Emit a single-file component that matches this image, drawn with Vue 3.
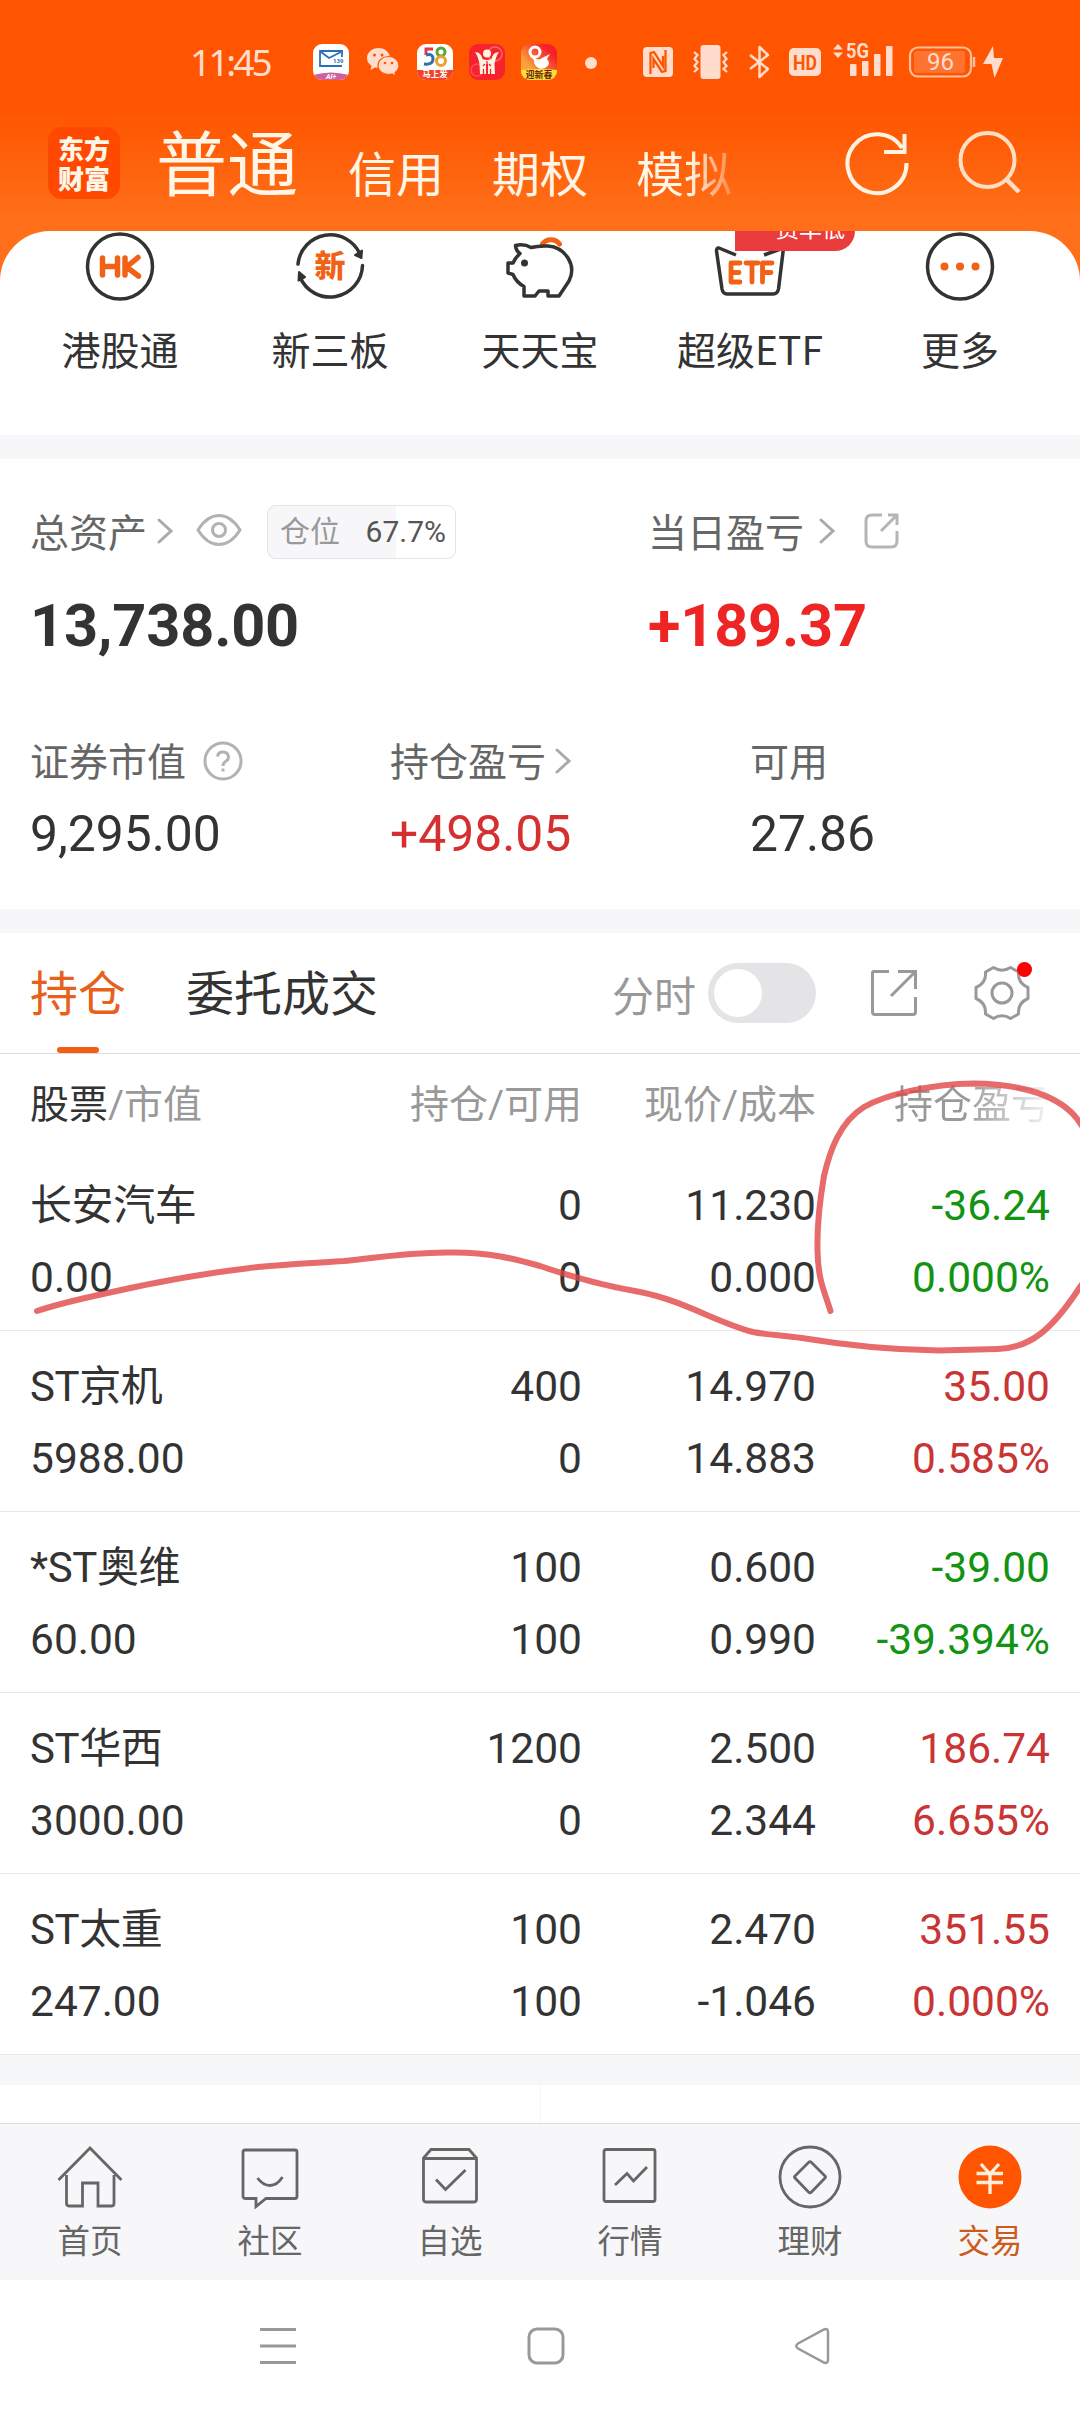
<script setup>
const markets = ['信用', '期权']
const positions = [
  { name: '长安汽车', value: '0.00', hold: '0', avail: '0', price: '11.230', cost: '0.000', pl: '-36.24', rate: '0.000%', trend: 'down' },
  { name: 'ST京机', value: '5988.00', hold: '400', avail: '0', price: '14.970', cost: '14.883', pl: '35.00', rate: '0.585%', trend: 'up' },
  { name: '*ST奥维', value: '60.00', hold: '100', avail: '100', price: '0.600', cost: '0.990', pl: '-39.00', rate: '-39.394%', trend: 'down' },
  { name: 'ST华西', value: '3000.00', hold: '1200', avail: '0', price: '2.500', cost: '2.344', pl: '186.74', rate: '6.655%', trend: 'up' },
  { name: 'ST太重', value: '247.00', hold: '100', avail: '100', price: '2.470', cost: '-1.046', pl: '351.55', rate: '0.000%', trend: 'up' },
]
</script>

<template>
  <div class="screen">
    <header class="top">
      <div class="status">
        <span class="time">11:45</span>
        <div class="apps">
          <svg width="36" height="36" viewBox="0 0 36 36">
            <defs><clipPath id="m1"><rect width="36" height="36" rx="9" /></clipPath></defs>
            <g clip-path="url(#m1)">
              <rect width="36" height="36" fill="#fff" />
              <path d="M0 31Q18 26 36 31V36H0Z" fill="#d0609c" />
              <path d="M29 13V7H7V22H29" fill="none" stroke="#2a70b8" stroke-width="1.8" />
              <path d="M8 8L16 14L28 8" fill="none" stroke="#2a70b8" stroke-width="1.8" />
              <text x="20" y="19" font-size="6" font-weight="700" fill="#2a70b8">139</text>
              <text x="18" y="35" font-size="7" font-weight="700" font-style="italic" fill="#fff" text-anchor="middle">AI+</text>
            </g>
          </svg>
          <svg width="36" height="36" viewBox="0 0 36 36">
            <g fill="#ffdccb">
              <path d="M13.500 4C7 4 2 8.500 2 14c0 3.500 1.800 6 4.500 7.800L5.500 26l4.500-2.500c1 .3 2.300.5 3.500.5C20 24 25 19.500 25 14S20 4 13.500 4Z" />
              <path d="M23.500 12.500c-6 0-10.500 4-10.500 9s4.500 9 10.500 9c1.200 0 2.300-.2 3.400-.5L31 32l-1-3.500c2.500-1.700 4-4.200 4-7 0-5-4.500-9-10.500-9Z" stroke="#ff5500" stroke-width="1.200" />
            </g>
            <g fill="#ff5500"><circle cx="9.500" cy="11" r="1.500" /><circle cx="17" cy="11" r="1.500" /><circle cx="20" cy="19" r="1.300" /><circle cx="27" cy="19" r="1.300" /></g>
          </svg>
          <svg width="36" height="36" viewBox="0 0 36 36">
            <defs><clipPath id="m2"><rect width="36" height="36" rx="9" /></clipPath></defs>
            <g clip-path="url(#m2)">
              <rect width="36" height="36" fill="#fff" />
              <rect y="26" width="36" height="10" fill="#f0432a" />
              <g fill="none" stroke-width="3">
                <path d="M16 5H9V11" stroke="#e2364a" />
                <path d="M9 11Q16 9 16 15T7 20" stroke="#2c6fb5" />
                <circle cx="24" cy="8" r="4" stroke="#58a63c" />
                <circle cx="24" cy="17" r="4.500" stroke="#eda027" />
              </g>
              <text x="18" y="33" font-size="8.500" font-weight="700" fill="#fff" text-anchor="middle">马上发</text>
            </g>
          </svg>
          <svg width="36" height="36" viewBox="0 0 36 36">
            <rect width="36" height="36" rx="9" fill="#f6232e" />
            <circle cx="26" cy="10" r="7" fill="none" stroke="#fa6a62" stroke-width="1.500" />
            <circle cx="8" cy="26" r="6" fill="none" stroke="#fa4f50" stroke-width="1.500" />
            <g fill="#fff3e2">
              <circle cx="18" cy="9.500" r="4" />
              <path d="M6 8Q12 8 13.500 15Q18 17 22.500 15Q24 8 30 8Q27 12 25.500 20L26 30H19V20H17V30H11L10.500 20Q9 12 6 8Z" />
            </g>
            <path d="M18 17V30M14 22L16 20M22 22L20 20M14.500 25V30M21.500 25V30" stroke="#f6232e" stroke-width="1.300" />
          </svg>
          <svg width="36" height="36" viewBox="0 0 36 36">
            <defs>
              <clipPath id="m3"><rect width="36" height="36" rx="9" /></clipPath>
              <linearGradient id="g3" x1="0" y1="1" x2="1" y2="0"><stop offset=".3" stop-color="#f9a13a" /><stop offset=".8" stop-color="#f5202a" /></linearGradient>
            </defs>
            <g clip-path="url(#m3)">
              <rect width="36" height="36" fill="url(#g3)" />
              <circle cx="14" cy="8" r="5" fill="none" stroke="#fff" stroke-width="3" />
              <path d="M9 13Q14 15 13 19Q17 27 24 24Q31 20 26 15L29 10L21 14Q17 18 12 12Z" fill="#fff" />
              <path d="M0 26Q18 24 36 26V36H0Z" fill="#ffe13a" />
              <text x="18" y="33.500" font-size="9" font-weight="700" fill="#6b2410" text-anchor="middle">迎新春</text>
            </g>
          </svg>
        </div>
        <i class="more-dot"></i>
        <svg class="s-nfc" width="30" height="30" viewBox="0 0 30 30">
          <rect width="30" height="30" rx="4" fill="#ffdccb" />
          <path d="M7.500 27V6L11 5L20 19V9M22.500 3V24L19 25L10.500 12V21" fill="none" stroke="#ff5500" stroke-width="2.300" />
        </svg>
        <svg class="s-vib" width="35" height="34" viewBox="0 0 35 34">
          <rect x="7.500" width="20" height="34" rx="3" fill="#ffdccb" />
          <path d="M1 7L4.500 10L1.500 14L4.500 17L1.500 21L4.500 24L1 27M34 7L30.500 10L33.500 14L30.500 17L33.500 21L30.500 24L34 27" fill="none" stroke="#ffdccb" stroke-width="2.300" />
        </svg>
        <svg class="s-bt" width="21" height="34" viewBox="0 0 21 34">
          <path d="M1 10L19 24L10.500 32V2L19 10L1 24" fill="none" stroke="#ffdccb" stroke-width="2.500" stroke-linejoin="round" />
        </svg>
        <svg class="s-hd" width="32" height="28" viewBox="0 0 32 28">
          <rect width="32" height="28" rx="5" fill="#ffdccb" />
          <text x="16" y="21.500" font-size="21" font-weight="700" fill="#ff5500" text-anchor="middle" textLength="24" lengthAdjust="spacingAndGlyphs">HD</text>
        </svg>
        <svg class="s-5g" width="60" height="34" viewBox="0 0 60 34">
          <g fill="#ffdccb">
            <path d="M0 6.500L5 1L10 6.500ZM0 9.500L5 15L10 9.500Z" />
            <text x="13" y="15" font-size="20" font-weight="700" textLength="23" lengthAdjust="spacingAndGlyphs">5G</text>
            <rect x="17" y="21" width="6.500" height="12" rx="1" /><rect x="29" y="18" width="6.500" height="15" rx="1" />
            <rect x="41" y="11" width="6.500" height="22" rx="1" /><rect x="53" y="3" width="6.500" height="30" rx="1" />
          </g>
        </svg>
        <svg class="s-bat" width="67" height="32" viewBox="0 0 67 32">
          <rect x="1" y="1.500" width="61" height="29" rx="8" fill="none" stroke="#ffbf9c" stroke-width="2.200" />
          <rect x="5" y="5" width="51" height="22" rx="3" fill="#ff7330" />
          <path d="M65 11V21" stroke="#ffbf9c" stroke-width="2.500" />
          <text x="31.500" y="24" font-size="24" fill="#ffdccb" text-anchor="middle">96</text>
        </svg>
        <svg class="s-bolt" width="20" height="32" viewBox="0 0 20 32"><path d="M10 0L0 18H8.500L11.500 32L20 12H11Z" fill="#ffdccb" /></svg>
      </div>
      <div class="appbar">
        <div class="logo"><span>东方</span><span>财富</span></div>
        <nav class="accounts">
          <b class="current">普通</b>
          <span v-for="m in markets" :key="m">{{ m }}</span>
          <span class="faded">模拟</span>
        </nav>
        <svg class="refresh" width="66" height="66" viewBox="0 0 66 66">
          <path d="M61.500 33A29.500 29.500 0 1 1 57 18M59.500 4V22H39" fill="none" stroke="#fff4e2" stroke-width="4" />
        </svg>
        <svg class="search" width="66" height="66" viewBox="0 0 66 66">
          <circle cx="29.500" cy="30" r="27" fill="none" stroke="#ffdfc4" stroke-width="4" />
          <path d="M48 49L61 62" stroke="#ffdfc4" stroke-width="4.500" />
        </svg>
      </div>
    </header>

    <div class="panel-wrap">
      <section class="shortcuts">
        <div class="shortcut">
          <svg width="72" height="72" viewBox="0 0 72 72">
            <circle cx="36" cy="35.500" r="32.500" fill="none" stroke="#333" stroke-width="3.500" />
            <g fill="none" stroke="#f26216" stroke-width="5.500" stroke-linecap="round" stroke-linejoin="round"><path d="M18.500 27V44M33.500 27V44M18.500 35.500H33.500M41 27V44M54 26.500L42.500 36L54.500 45" /></g>
          </svg>
          <span>港股通</span>
        </div>
        <div class="shortcut">
          <svg width="72" height="72" viewBox="0 0 72 72">
            <path d="M4 33A32.500 32.500 0 0 1 66 23M68.500 34.500A32.500 32.500 0 0 1 6 46" fill="none" stroke="#333" stroke-width="3.500" stroke-linecap="round" />
            <path d="M61 24L68 19.500L67.500 27ZM11 46L4.500 49.500L5 41Z" fill="#333" stroke="#333" stroke-width="2" stroke-linejoin="round" />
            <text class="cjk" x="36" y="46" font-size="31" font-weight="900" fill="#f26216" text-anchor="middle">新</text>
          </svg>
          <span>新三板</span>
        </div>
        <div class="shortcut">
          <svg width="72" height="72" viewBox="0 0 72 72">
            <path d="M38.500 13A10.500 10.500 0 0 1 55.500 13" fill="none" stroke="#f26216" stroke-width="5" stroke-linecap="round" />
            <path d="M27 16.500Q20 12.500 11.500 14.500Q12 20 16 22.500Q11 27 9 32H4V42L9 43.500Q12 51 20 55.500V65H31L35 60H44V65H55L65 50Q71 38 64 27Q57 16 44 15Q35 14.500 27 16.500Z" fill="none" stroke="#333" stroke-width="3.500" stroke-linejoin="round" />
            <circle cx="20.500" cy="32" r="3.500" fill="#333" />
          </svg>
          <span>天天宝</span>
        </div>
        <div class="shortcut">
          <svg width="72" height="72" viewBox="0 0 72 72">
            <path d="M22 24L5 17Q2.500 16.500 2.500 20L8 58Q9 63 13 63H59Q63.500 63 64.500 58L69.500 17L50 24" fill="none" stroke="#333" stroke-width="3.500" stroke-linejoin="round" />
            <g fill="none" stroke="#f26216" stroke-width="4.800" stroke-linecap="round" stroke-linejoin="round"><path d="M26 32H17V51H26M17 41.500H25M32 32H44M38 32V51M58 32H48.500V51M48.500 41.500H57" /></g>
          </svg>
          <span>超级ETF</span>
          <em class="promo">费率低</em>
        </div>
        <div class="shortcut">
          <svg width="72" height="72" viewBox="0 0 72 72">
            <circle cx="36" cy="35.500" r="32.500" fill="none" stroke="#333" stroke-width="3.500" />
            <g fill="#f26216"><circle cx="20.500" cy="35.500" r="4" /><circle cx="36" cy="35.500" r="4" /><circle cx="51.500" cy="35.500" r="4" /></g>
          </svg>
          <span>更多</span>
        </div>
      </section>
    </div>

    <section class="assets">
      <div class="line main-labels">
        <div class="cell wide">
          <span>总资产</span>
          <svg class="chev c1" width="18" height="28" viewBox="0 0 18 28"><path d="M3 3L15 14L3 25" /></svg>
          <svg class="eye" width="46" height="34" viewBox="0 0 46 34"><path d="M2 17Q11 2.500 23 2.500T44 17Q35 31.500 23 31.500T2 17Z" /><circle cx="23" cy="17" r="6.500" /></svg>
          <div class="ratio"><span>仓位</span><b>67.7%</b></div>
        </div>
        <div class="cell">
          <span>当日盈亏</span>
          <svg class="chev c2" width="18" height="28" viewBox="0 0 18 28"><path d="M3 3L15 14L3 25" /></svg>
          <svg class="share" width="36" height="36" viewBox="0 0 36 36"><path d="M18 2H8Q2 2 2 8V28Q2 34 8 34H27Q33 34 33 28V18M17 18L32 3M24 2H33V12" /></svg>
        </div>
      </div>
      <div class="line totals">
        <strong class="wide">13,738.00</strong><strong class="gain">+189.37</strong>
      </div>
      <div class="line sub-labels">
        <div class="cell third"><span>证券市值</span>
          <svg class="help" width="40" height="40" viewBox="0 0 40 40"><circle cx="20" cy="20" r="18" /><path d="M14.500 15.500Q15 11 20 11T25.500 16Q25.500 19 22.500 20.500Q20 22 20 25M20 27.500V30.500" /></svg>
        </div>
        <div class="cell third"><span>持仓盈亏</span><svg class="chev c3" width="18" height="28" viewBox="0 0 18 28"><path d="M3 3L15 14L3 25" /></svg></div>
        <div class="cell"><span>可用</span></div>
      </div>
      <div class="line subs">
        <span class="third">9,295.00</span><span class="third red">+498.05</span><span>27.86</span>
      </div>
    </section>

    <section class="holdings">
      <div class="tabs">
        <div class="tab active">持仓</div>
        <div class="tab">委托成交</div>
        <span class="mode">分时</span>
        <div class="toggle"><i></i></div>
        <svg class="export" width="48" height="48" viewBox="0 0 48 48"><path d="M19 2.500H4Q2.500 2.500 2.500 4V43Q2.500 45.500 5 45.500H43Q45.500 45.500 45.500 43V28M21 27L44 4M28 2.500H45.500V20" /></svg>
        <div class="gear">
          <svg width="56" height="56" viewBox="0 0 56 56"><path d="M19.500 2.500Q28 8 36.500 2.500L44.500 7Q43.500 18 54 22.500V33.500Q43.500 38 44.500 49L36.500 53.500Q28 48 19.500 53.500L11.500 49Q12.500 38 2 33.500V22.500Q12.500 18 11.500 7Z" /><circle cx="28" cy="28" r="10" /></svg>
          <i></i>
        </div>
      </div>
      <div class="row head">
        <div class="c1"><b>股票</b>/市值</div>
        <div class="c2">持仓/可用</div>
        <div class="c3">现价/成本</div>
        <div class="c4"><span>持仓盈亏</span></div>
      </div>
      <div v-for="p in positions" :key="p.name" class="row item">
        <div class="c1"><span class="name">{{ p.name }}</span><br />{{ p.value }}</div>
        <div class="c2">{{ p.hold }}<br />{{ p.avail }}</div>
        <div class="c3">{{ p.price }}<br />{{ p.cost }}</div>
        <div class="c4" :class="p.trend">{{ p.pl }}<br />{{ p.rate }}</div>
      </div>
      <svg class="scribble" width="1080" height="300" viewBox="0 1070 1080 300">
        <path d="M37 1311C58 1304 80 1299 103 1294C155 1282 205 1273 258 1267C290 1264 315 1263 344 1261C380 1257 415 1252 450 1252.500C490 1252 515 1259 540 1266C575 1278 605 1286 640 1292C685 1301 715 1322 753 1332C768 1335 782 1335 802 1338C850 1346 890 1350 939 1350.500L998 1349C1030 1348 1052 1330 1080 1287C1115 1240 1115 1170 1080 1123C1062 1095 1020 1084 974 1083.500C930 1084 885 1095 864 1107C840 1122 830 1150 824 1176C819 1205 817 1230 817.500 1250C818 1280 824 1290 830.500 1311" />
      </svg>
    </section>

    <div class="next"><i></i><i></i></div>

    <nav class="tabbar">
      <div class="item"><svg width="66" height="66" viewBox="0 0 66 66"><path d="M1.500 35L33 3L64.500 35M9.500 30V58Q9.500 61 12 61H25.500V38H41V61H55Q57 61 57 58V30" /></svg><span>首页</span></div>
      <div class="item"><svg width="66" height="66" viewBox="0 0 66 66"><path d="M8 5H58Q60 5 60 7V51Q60 53.500 58 53.500H29L19 61.500V53.500H8Q6 53.500 6 51V7Q6 5 8 5ZM20.500 33Q26 40.500 33 40.500T45.500 32" /></svg><span>社区</span></div>
      <div class="item"><svg width="66" height="66" viewBox="0 0 66 66"><path d="M14 4.500H52L59.500 13V54Q59.500 57 57 57H9Q6.500 57 6.500 54V13ZM7 13.500H59M19 34.500L28.500 44.500L48.500 25" /></svg><span>自选</span></div>
      <div class="item"><svg width="66" height="66" viewBox="0 0 66 66"><rect x="7" y="4.500" width="51" height="52" rx="2" /><path d="M18 40L30 28.500L36.500 36L50 22" /></svg><span>行情</span></div>
      <div class="item"><svg width="66" height="66" viewBox="0 0 66 66"><circle cx="33" cy="32" r="30" /><path d="M31.500 17.500Q33 16 34.500 17.500L48 31Q49 32 48 33L34.500 47Q33 48.500 31.500 47L18 33Q17 32 18 31Z" /></svg><span>理财</span></div>
      <div class="item on"><svg width="66" height="66" viewBox="0 0 66 66"><circle cx="33" cy="32" r="31.500" /><path d="M24 19L33 29L42 19M19.500 28.500H46M19.500 37.500H46M33 29V49" /></svg><span>交易</span></div>
    </nav>

    <footer class="sysnav">
      <svg width="38" height="40" viewBox="0 0 38 40"><path d="M1 3.500H37M1 20H37M1 36.500H37" /></svg>
      <svg width="40" height="40" viewBox="0 0 40 40"><rect x="3" y="3" width="34" height="34" rx="8" /></svg>
      <svg width="38" height="40" viewBox="0 0 38 40"><path d="M3 17.500L29 3.500Q33 2 33 6V34Q33 38 29 36.500L3 22.500Q-0.500 20 3 17.500Z" stroke-width="2.500" /></svg>
    </footer>
  </div>
</template>

<style>
body { margin: 0; background: #fff; }
</style>

<style scoped>
.screen { width: 1080px; height: 2412px; overflow: hidden; display: flex; flex-direction: column; background: #fff; color: #333; font-family: Roboto, "Noto Sans CJK SC", sans-serif; }
svg { display: block; flex: none; overflow: visible; }
b, em, i { font-weight: inherit; font-style: normal; }
.top { height: 231px; background: linear-gradient(#ff5500 0 110px, #ff6e18 215px); }
.status { height: 124px; display: flex; align-items: center; padding-left: 190px; }
.time { width: 123px; font: 400 37px/44px "Noto Sans", sans-serif; letter-spacing: -3px; color: #ffdccb; }
.apps { display: flex; gap: 16px; }
.more-dot { width: 12px; height: 12px; border-radius: 50%; background: #ffdccb; margin: 2px 46px 0 28px; }
.s-vib { margin-left: 20px; }
.s-bt { margin-left: 21px; }
.s-hd { margin-left: 19px; }
.s-5g { margin-left: 12px; margin-top: -4px; }
.s-bat { margin-left: 16px; }
.s-bolt { margin-left: 7px; }
.appbar { height: 78px; display: flex; align-items: center; padding-left: 48px; }
.logo { width: 72px; height: 72px; border-radius: 14px; background: #ff4800; color: #fff6e8; display: flex; flex-direction: column; align-items: center; justify-content: center; font: 900 26px/31px "Noto Sans CJK SC", sans-serif; }
.logo span { margin-top: -1px; }
.accounts { width: 655px; margin-left: 36px; padding-top: 2px; display: flex; align-items: baseline; color: #fff6e8; font: 400 48px/78px "Noto Sans CJK SC", sans-serif; }
.accounts .current { font-size: 71px; margin-right: 2px; }
.accounts span { margin-left: 48px; padding-top: 3px; transform: translateY(2px); }
.accounts .faded { background: linear-gradient(90deg, #fff6e8 55%, #ff8a4a 100%); background-clip: text; -webkit-background-clip: text; color: transparent; }
.refresh { margin-left: 34px; }
.search { margin-left: 47px; }
.panel-wrap { background: #ff6e18; }
.shortcuts { height: 204px; box-sizing: border-box; background: #fff; border-radius: 50px 50px 0 0; overflow: hidden; display: flex; padding: 0 15px; }
.shortcut { width: 210px; position: relative; display: flex; flex-direction: column; align-items: center; font: 400 39px/56px "Noto Sans CJK SC", sans-serif; }
.shortcut > span { margin-top: 17px; }
.cjk { font-family: "Noto Sans CJK SC", sans-serif; }
.promo { position: absolute; left: 90px; top: -22px; width: 120px; height: 42px; box-sizing: border-box; padding-left: 41px; background: #ea3c3c; border-radius: 0 0 20px 0; color: #fff; font-size: 23px; line-height: 37px; }
.assets { height: 450px; border-top: 24px solid #f7f7fa; border-bottom: 24px solid #f7f7fa; padding-left: 30px; color: #333; }
.line { display: flex; align-items: center; }
.wide { width: 618px; }
.third { width: 360px; }
.cell { display: flex; align-items: center; font-size: 39px; line-height: 54px; color: #666; }
.main-labels { padding-top: 45px; height: 54px; }
.cell > span { padding-top: 3px; }
.main-labels .cell > span { padding-top: 5px; }
.chev { fill: none; stroke: #aaa; stroke-width: 3; stroke-linecap: round; }
.c1.chev { margin-left: 9px; }
.c2.chev { margin-left: 14px; }
.c3.chev { margin-left: 8px; }
.eye { margin-left: 22px; margin-top: -3px; fill: none; stroke: #b2b2b2; stroke-width: 3; }
.ratio { margin-left: 25px; margin-top: 1px; width: 189px; height: 54px; box-sizing: border-box; border: 1.500px solid #e4e4e6; border-radius: 9px; background: linear-gradient(90deg, #f7f7fa 68.500%, #fff 68.500%); display: flex; align-items: center; justify-content: space-between; padding: 0 9px 0 12px; font-size: 30px; color: #999; }
.ratio b { color: #555; }
.share { margin-left: 28px; fill: none; stroke: #b5b5b5; stroke-width: 3; }
.totals { margin-top: 34px; height: 68px; font-size: 59.500px; line-height: 68px; }
.totals strong { letter-spacing: -.2px; }
strong { font-weight: 700; }
.gain { color: #ee2525; }
.sub-labels { margin-top: 74px; height: 54px; }
.help { margin-left: 17px; margin-top: -1px; fill: none; stroke: #b2b2b2; stroke-width: 3; }
.subs { margin-top: 16px; height: 60px; font-size: 49.800px; line-height: 60px; }
.red { color: #d5302f; }
.holdings { position: relative; height: 1122px; }
.tabs { height: 121px; box-sizing: border-box; border-bottom: 1.500px solid #ddd; display: flex; align-items: center; padding-left: 30px; font-size: 48px; }
.tab { position: relative; line-height: 120px; margin-right: 60px; padding-top: 4px; }
.tab.active { color: #e9601a; }
.tab.active::after { content: ""; position: absolute; left: 27px; bottom: 2px; width: 42px; height: 6px; border-radius: 3px; background: #f05f13; }
.mode { margin-left: 174px; width: 96px; font-size: 42px; color: #999; }
.toggle { width: 108px; height: 60px; border-radius: 30px; background: #e4e4e7; display: flex; align-items: center; }
.toggle i { width: 48px; height: 48px; border-radius: 50%; background: #fff; margin-left: 6px; }
.export { margin-left: 54px; fill: none; stroke: #999; stroke-width: 3; }
.gear { position: relative; margin-left: 56px; }
.gear svg { fill: none; stroke: #999; stroke-width: 3; stroke-linejoin: round; }
.gear i { position: absolute; right: -2px; top: -3px; width: 15px; height: 15px; border-radius: 50%; background: #f00; }
.row { display: flex; padding-left: 30px; box-sizing: border-box; }
.row .c1 { width: 250px; }
.row .c2 { width: 302px; text-align: right; }
.row .c3 { width: 234px; text-align: right; }
.row .c4 { width: 234px; text-align: right; }
.head { height: 96px; font-size: 39px; line-height: 103px; color: #999; }
.head b { color: #333; }
.head .c4 span { background: linear-gradient(90deg, #999 45%, #f4f4f4 100%); background-clip: text; -webkit-background-clip: text; color: transparent; }
.row.item { height: 181px; border-bottom: 1.500px solid #e9e9e9; padding-top: 20px; font-size: 42.500px; line-height: 72px; }
.name { font-size: 42px; letter-spacing: -.4px; line-height: 1; }
.up { color: #c93434; }
.down { color: #129312; }
.scribble { position: absolute; left: 0; top: 137px; fill: none; stroke: #e14646; stroke-opacity: .8; stroke-width: 6; stroke-linecap: round; stroke-linejoin: round; }
.next { height: 38px; border-top: 30px solid #f6f7f9; display: flex; gap: 1px; background: #f7f7f7; }
.next i { flex: 1; background: #fff; }
.tabbar { height: 157px; box-sizing: border-box; background: #f7f7fa; border-top: 1px solid #ddd; display: flex; }
.tabbar .item { width: 180px; display: flex; flex-direction: column; align-items: center; padding-top: 21px; font-size: 32.500px; line-height: 44px; color: #666; }
.tabbar svg { fill: none; stroke: #666; stroke-width: 2.800; }
.tabbar span { margin-top: 9px; }
.tabbar .on { color: #cd5c1c; }
.tabbar .on circle { fill: #ff5500; stroke: none; }
.tabbar .on path { stroke: #fff0de; stroke-width: 3.300; }
.sysnav { height: 132px; display: flex; align-items: center; padding-left: 259px; gap: 229px; }
.sysnav svg { fill: none; stroke: #999; stroke-width: 3; }
</style>
